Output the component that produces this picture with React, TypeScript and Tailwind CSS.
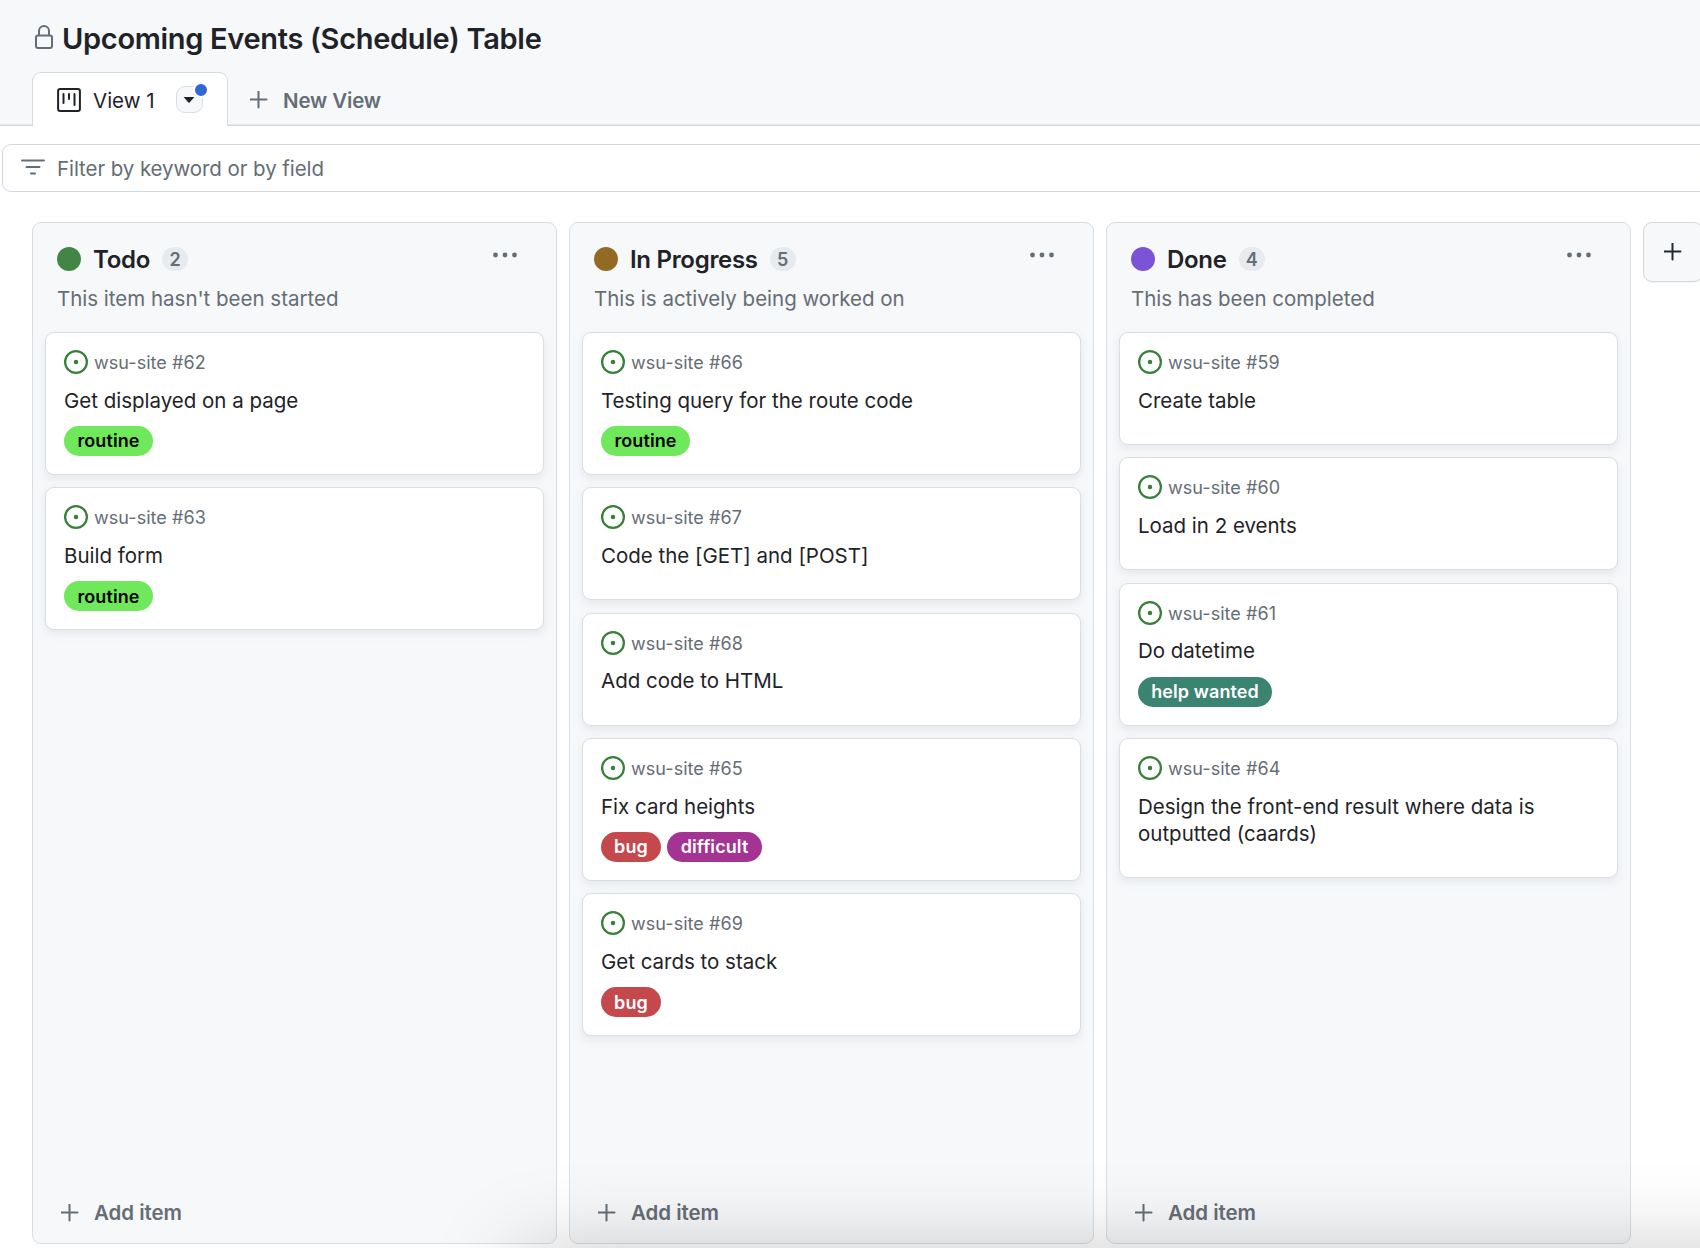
import React from "react";

type Label = { text: string; cls: string };
type Item = { id: number; title: string; labels?: Label[]; cls: string };
type Column = { name: string; count: number; desc: string; dot: string; items: Item[] };

const routine: Label = { text: "routine", cls: "bg-[#6fe95b] text-black w-[89px]" };
const bug: Label = { text: "bug", cls: "bg-[#c5484d] text-white w-[60px]" };
const difficult: Label = { text: "difficult", cls: "bg-[#a43393] text-white w-[95px]" };
const help: Label = { text: "help wanted", cls: "bg-[#3b8472] text-white w-[134px]" };

const tall = "h-[142.9px]";
const short = "h-[113px]";
const double = "h-[139.5px]";

const columns: Column[] = [
  {
    name: "Todo", count: 2, desc: "This item hasn't been started", dot: "bg-[#428646]",
    items: [
      { id: 62, title: "Get displayed on a page", labels: [routine], cls: tall },
      { id: 63, title: "Build form", labels: [routine], cls: tall },
    ],
  },
  {
    name: "In Progress", count: 5, desc: "This is actively being worked on", dot: "bg-[#936a23]",
    items: [
      { id: 66, title: "Testing query for the route code", labels: [routine], cls: tall },
      { id: 67, title: "Code the [GET] and [POST]", cls: short },
      { id: 68, title: "Add code to HTML", cls: short },
      { id: 65, title: "Fix card heights", labels: [bug, difficult], cls: tall },
      { id: 69, title: "Get cards to stack", labels: [bug], cls: tall },
    ],
  },
  {
    name: "Done", count: 4, desc: "This has been completed", dot: "bg-[#7c52d6]",
    items: [
      { id: 59, title: "Create table", cls: short },
      { id: 60, title: "Load in 2 events", cls: short },
      { id: 61, title: "Do datetime", labels: [help], cls: tall },
      { id: 64, title: "Design the front-end result where data is outputted (caards)", cls: double },
    ],
  },
];

function Plus({ className }: { className?: string }) {
  return (
    <svg width="18" height="18" viewBox="0 0 18 18" fill="none" stroke="currentColor" strokeWidth="2" strokeLinecap="round" className={className}>
      <path d="M8.500 0.500v16M0.500 8.500h16" />
    </svg>
  );
}

function OpenIssue() {
  return (
    <svg width="24" height="24" viewBox="0 0 16 16" fill="#36803a" className="shrink-0">
      <path d="M8 9.5a1.5 1.5 0 1 0 0-3 1.5 1.5 0 0 0 0 3Z" />
      <path d="M8 0a8 8 0 1 1 0 16A8 8 0 0 1 8 0ZM1.5 8a6.5 6.5 0 1 0 13 0 6.5 6.5 0 0 0-13 0Z" />
    </svg>
  );
}

function Card({ item }: { item: Item }) {
  return (
    <div className={`shrink-0 rounded-[9px] border border-[#d8dee4] bg-white pl-[18px] pr-4 pt-[17px] shadow-[0_4px_9px_rgba(140,149,159,0.15)] ${item.cls}`}>
      <div className="flex h-6 items-center gap-[6px]">
        <OpenIssue />
        <span className="pt-[2px] text-[18px] leading-6 tracking-[0.05px] text-[#656d76]">wsu-site #{item.id}</span>
      </div>
      <div className="mt-[12.6px] text-[20.5px] leading-[27px] tracking-[-0.01px] text-[#1f2328]">{item.title}</div>
      {item.labels && (
        <div className="mt-[12.2px] flex gap-[6px]">
          {item.labels.map((l) => (
            <span key={l.text} className={`flex h-[30px] items-center justify-center whitespace-nowrap rounded-full text-[18px] font-semibold tracking-[0.1px] ${l.cls}`}>
              {l.text}
            </span>
          ))}
        </div>
      )}
    </div>
  );
}

function BoardColumn({ col }: { col: Column }) {
  return (
    <section className="flex w-[525px] shrink-0 flex-col rounded-[9px] border border-[#d8dee4] bg-[#f6f8fa] px-3">
      <div className="flex h-[109px] shrink-0 flex-col pl-[12px] pt-[24px]">
        <div className="flex h-6 items-center">
          <span className={`h-6 w-6 rounded-full ${col.dot}`} />
          <h2 className="ml-[12px] whitespace-nowrap pt-[2px] text-[24px] font-semibold leading-6 tracking-[-0.3px] text-[#1f2328]">{col.name}</h2>
          <span className="ml-[12px] flex h-6 w-[26px] items-center justify-center rounded-full bg-[#e8ebee] text-[18px] font-semibold text-[#656d76]">{col.count}</span>
          <svg width="26" height="6" viewBox="0 0 26 6" fill="#656d76" className="mb-[8px] ml-auto mr-[26px]">
            <circle cx="3.5" cy="3" r="2.4" />
            <circle cx="13" cy="3" r="2.4" />
            <circle cx="22.5" cy="3" r="2.4" />
          </svg>
        </div>
        <p className="mt-[14px] text-[20.5px] leading-[27px] tracking-[-0.01px] text-[#656d76]">{col.desc}</p>
      </div>
      <div className="flex flex-col gap-[12.4px]">
        {col.items.map((i) => (
          <Card key={i.id} item={i} />
        ))}
      </div>
      <div className="mt-auto flex h-[60px] items-center gap-[15px] pl-[16px] text-[#656d76]">
        <Plus />
        <span className="text-[20.5px] font-semibold tracking-[-0.05px]">Add item</span>
      </div>
    </section>
  );
}

export default function App() {
  return (
    <div className="relative flex h-[1248px] w-[1700px] flex-col overflow-hidden bg-white font-[Inter,sans-serif]">
      <header className="relative h-[126px] shrink-0 bg-[#f6f8fa] pl-8 shadow-[inset_0_-1px_#d0d7de,inset_0_-2px_#e3e7ec]">
        <div className="flex h-[72px] items-center pl-[3px] pt-[5px]">
          <svg width="18" height="24" viewBox="0 0 18 24" fill="none" stroke="#656d76" strokeWidth="2" className="mb-[3px]">
            <rect x="1" y="10.500" width="16" height="12.500" rx="2" />
            <path d="M4 10.500V6a5 5 0 0 1 10 0v4.500" />
          </svg>
          <h1 className="ml-[9px] whitespace-nowrap text-[29px] font-semibold tracking-[-0.31px] text-[#1f2328]">Upcoming Events (Schedule) Table</h1>
        </div>
        <div className="flex h-[54px] items-center">
          <div className="flex h-[54px] w-[196px] items-center rounded-t-[9px] border border-b-0 border-[#d4dae1] bg-white pl-6">
            <svg width="24" height="24" viewBox="0 0 24 24" fill="none" stroke="#1f2328" strokeWidth="2" strokeLinecap="round" className="shrink-0">
              <rect x="1.100" y="1.100" width="21.800" height="21.800" rx="2" />
              <path d="M6.500 6v9M12 6v5M17.500 6v11" />
            </svg>
            <span className="ml-[12px] whitespace-nowrap pt-[3px] text-[20.5px] text-[#1f2328]">View 1</span>
            <span className="relative ml-auto mr-6 flex h-[27px] w-[27px] items-center justify-center rounded-[9px] border border-[#d8dee4] bg-[#f6f8fa]">
              <svg width="12" height="6" viewBox="0 0 12 6" fill="#1f2328" className="mr-px"><path d="M0.600 0h10.800L6.600 5.600q-.6.500-1.200 0z" /></svg>
              <span className="absolute -right-[7px] -top-[5px] h-4 w-4 rounded-full border-2 border-white bg-[#2f68d5]" />
            </span>
          </div>
          <div className="flex items-center gap-[15px] pl-[22px] pt-[2px] text-[#656d76]">
            <Plus />
            <span className="pt-[2px] text-[20.5px] font-semibold tracking-[-0.15px]">New View</span>
          </div>
        </div>
      </header>

      <div className="ml-[2px] mt-[18px] flex h-[48px] w-[1720px] shrink-0 items-center rounded-[9px] border border-[#d0d7de] bg-white pl-[18px]">
        <svg width="24" height="16" viewBox="0 0 24 16" fill="none" stroke="#656d76" strokeWidth="2" strokeLinecap="round" className="mb-[2px]">
          <path d="M1 1.500h22M5.500 8h13M10 14.500h4" />
        </svg>
        <span className="ml-[12px] pt-[2px] text-[20.5px] tracking-[-0.08px] text-[#656d76]">Filter by keyword or by field</span>
      </div>

      <main className="mt-[30px] flex h-[1022px] shrink-0 gap-3 pl-8">
        {columns.map((c) => (
          <BoardColumn key={c.name} col={c} />
        ))}
        <button className="flex h-[60px] w-[60px] shrink-0 items-center justify-center rounded-[9px] border border-[#d5d8da] bg-[#f6f8fa] text-[#24292f] shadow-[0_1px_0_rgba(31,35,40,0.04)]">
          <Plus />
        </button>
      </main>

      <div className="pointer-events-none absolute left-[522px] top-[1258px] h-[200px] w-[1400px] shadow-[0_0_90px_rgba(0,0,0,0.25)]" />
    </div>
  );
}
